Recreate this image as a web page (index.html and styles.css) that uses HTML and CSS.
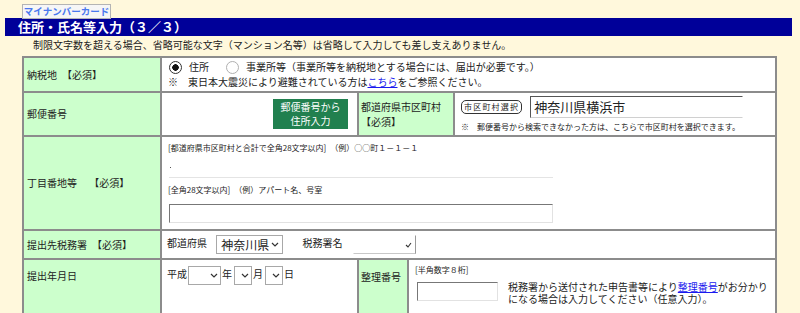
FILE: index.html
```html
<!DOCTYPE html>
<html lang="ja">
<head>
    <meta charset="UTF-8">
    <title>住所・氏名等入力</title>
    <link rel="stylesheet" href="styles.css">
</head>
<body>

    <div class="top"><span class="mynumber">マイナンバーカード</span></div>
    <h1 class="bar">住所・氏名等入力（３／３）</h1>
    <p class="lead">制限文字数を超える場合、省略可能な文字（マンション名等）は省略して入力しても差し支えありません。</p>

    <table class="form">
        <colgroup>
            <col class="c-label">
            <col class="c-a">
            <col class="c-b">
            <col class="c-c">
            <col class="c-d">
        </colgroup>
        <tr class="r1">
            <th>納税地　【必須】</th>
            <td colspan="4" class="place">
                <div class="line">
                    <span class="radio checked"></span><span class="opt">住所</span>
                    <span class="radio"></span><span class="opt">事業所等（事業所等を納税地とする場合には、届出が必要です。）</span>
                </div>
                <div class="line">※　東日本大震災により避難されている方は<a href="#">こちら</a>をご参照ください。</div>
            </td>
        </tr>
        <tr class="r2">
            <th>郵便番号</th>
            <td class="zip"><span class="zip-btn">郵便番号から<br>住所入力</span></td>
            <th colspan="2" class="sub">都道府県市区町村<br>【必須】</th>
            <td class="city">
                <div class="city-row">
                    <span class="pill">市区町村選択</span>
                    <input class="city-input" type="text" value="神奈川県横浜市">
                </div>
                <div class="note">※　郵便番号から検索できなかった方は、こちらで市区町村を選択できます。</div>
            </td>
        </tr>
        <tr class="r3">
            <th>丁目番地等　 【必須】</th>
            <td colspan="4" class="street">
                <div class="note">[都道府県市区町村と合計で全角28文字以内]　（例）○○町１－１－１</div>
                <div class="thin"></div>
                <div class="note">[全角28文字以内]　（例）アパート名、号室</div>
                <input class="wide-input" type="text">
            </td>
        </tr>
        <tr class="r4">
            <th>提出先税務署　【必須】</th>
            <td colspan="4" class="office">
                <span>都道府県</span>
                <span class="select pref">神奈川県
                    <svg width="8" height="5" viewBox="0 0 8 5"><path d="M1 1l3 3 3-3" fill="none" stroke="#333" stroke-width="1.2"/></svg>
                </span>
                <span class="office-label">税務署名</span>
                <span class="select blank">
                    <svg width="7" height="6" viewBox="0 0 7 6"><path d="M1 3l2 2 3-4" fill="none" stroke="#333" stroke-width="1.1"/></svg>
                </span>
            </td>
        </tr>
        <tr class="r5">
            <th>提出年月日</th>
            <td class="date">
                平成<span class="select yy"><svg width="8" height="5" viewBox="0 0 8 5"><path d="M1 1l3 3 3-3" fill="none" stroke="#333" stroke-width="1.2"/></svg></span>年<span class="select md"><svg width="8" height="5" viewBox="0 0 8 5"><path d="M1 1l3 3 3-3" fill="none" stroke="#333" stroke-width="1.2"/></svg></span>月<span class="select md"><svg width="8" height="5" viewBox="0 0 8 5"><path d="M1 1l3 3 3-3" fill="none" stroke="#333" stroke-width="1.2"/></svg></span>日
            </td>
            <th class="sub">整理番号</th>
            <td colspan="2" class="refno">
                <div class="note">[半角数字８桁]</div>
                <div class="ref-row">
                    <input class="ref-input" type="text">
                    <p>税務署から送付された申告書等により<a href="#">整理番号</a>がお分かりになる場合は入力してください（任意入力）。</p>
                </div>
            </td>
        </tr>
        <tr class="r6">
            <th></th>
            <td colspan="4"></td>
        </tr>
    </table>

</body>
</html>
```

FILE: styles.css
```css
body {
    margin: 0;
    background-color: #fff8dc;
    font-family: "Noto Sans CJK JP", sans-serif;
    font-size: 10px;
    color: #222;
}
a {
    color: #1a1aee;
}
.top {
    height: 15px;
    padding: 3px 0 0 22px;
}
.mynumber {
    display: inline-block;
    box-sizing: border-box;
    width: 89px;
    height: 15px;
    background-color: #f6f6f6;
    border: 1px solid #b4b4b4;
    color: #4a78ee;
    font-size: 9.5px;
    font-weight: bold;
    line-height: 13px;
    text-align: center;
}
.bar {
    margin: 0 8px 0 5px;
    height: 18px;
    padding-left: 13px;
    background-color: #000099;
    color: white;
    font-size: 13px;
    font-weight: bold;
    line-height: 18px;
}
.lead {
    margin: 0 0 2px 0;
    padding-left: 33px;
    line-height: 18px;
}

/* form table */
.form {
    margin-left: 22px;
    width: 755px;
    table-layout: fixed;
    border-collapse: collapse;
    background-color: white;
}
.c-label { width: 138px; }
.c-a { width: 197px; }
.c-b { width: 50px; }
.c-c { width: 46px; }
th, td {
    border: 2px solid #8c8c8c;
    padding: 0;
    line-height: 14px;
}
th {
    background-color: #ccffcc;
    font-weight: normal;
    text-align: left;
    padding-left: 3px;
}
td {
    padding-left: 6px;
}
.r1 th { height: 33px; }
.r2 th { height: 42px; }
.r3 th { height: 92px; }
.r4 th { height: 27px; }
.r5 th, .r5 td { vertical-align: top; }
.r5 td { height: 51px; }
.r5 th { padding-top: 9px; height: 42px; }
.r6 th { height: 10px; }

/* row 1 */
.place .line {
    display: flex;
    align-items: center;
    height: 15px;
}
.radio {
    box-sizing: border-box;
    width: 13px;
    height: 13px;
    margin: 0 7px 0 1px;
    border: 1px solid #b0b0b0;
    border-radius: 50%;
    background-color: white;
}
.radio.checked {
    border-color: #333;
    background: radial-gradient(circle, #111 0 3px, white 3.5px);
}
.opt {
    margin-right: 16px;
}

/* row 2 */
.zip {
    text-align: right;
    padding-right: 9px;
}
.zip-btn {
    display: inline-block;
    width: 75px;
    padding: 1px 0;
    background-color: #21804f;
    color: white;
    font-size: 10px;
    line-height: 14px;
    text-align: center;
    vertical-align: middle;
}
.sub {
    padding-left: 2px;
    line-height: 15px;
}
.city {
    vertical-align: top;
    padding-top: 2px;
}
.city-row {
    display: flex;
    align-items: center;
    height: 23px;
}
.pill {
    box-sizing: border-box;
    height: 14px;
    padding: 0 2px;
    border: 1px solid #333;
    border-radius: 5px;
    font-size: 8px;
    letter-spacing: 1.2px;
    line-height: 12px;
}
.city-input {
    box-sizing: border-box;
    width: 213px;
    height: 22px;
    margin-left: 8px;
    padding: 0 3px;
    border: 1px solid;
    border-color: #555 white #d0d0d0 #555;
    font-family: "Noto Sans CJK JP", sans-serif;
    font-size: 13px;
    color: #222;
}
.note {
    font-size: 8px;
    line-height: 14px;
}
.city .note {
    margin-top: 2px;
    line-height: 13px;
}

/* row 3 */
.street {
    vertical-align: top;
    padding-top: 4px;
}
.thin {
    position: relative;
    width: 384px;
    height: 22px;
    margin-left: 1px;
    margin-bottom: 5px;
    border-bottom: 1px solid #e4e4e4;
}
.thin::before {
    content: "";
    position: absolute;
    left: 1px;
    top: 12px;
    width: 1px;
    height: 1px;
    background-color: #555;
}
.wide-input {
    box-sizing: border-box;
    display: block;
    width: 384px;
    height: 19px;
    margin: 7px 0 0 1px;
    border: 1px solid;
    border-color: #777 #e2e2e2 #e2e2e2 #777;
}

/* row 4 */
.office {
    padding-left: 5px;
}
.select {
    box-sizing: border-box;
    display: inline-flex;
    align-items: center;
    justify-content: flex-end;
    height: 19px;
    padding-right: 3px;
    border: 1px solid #a8a8a8;
    background-color: white;
    vertical-align: middle;
}
.pref {
    width: 67px;
    margin-left: 7px;
    justify-content: space-between;
    padding-left: 4px;
    font-size: 12px;
}
.office-label {
    margin-left: 17px;
}
.blank {
    width: 63px;
    margin-left: 8px;
    border-color: transparent #999 #c8c8c8 transparent;
}

/* row 5 */
.date {
    padding-top: 4px;
    padding-left: 5px;
    line-height: 20px;
}
.yy {
    width: 33px;
    margin: 0 1px;
    padding-right: 2px;
}
.md {
    width: 18px;
    margin: 0 1px 0 2px;
    padding-right: 2px;
}
.refno {
    padding-top: 3px;
}
.ref-row {
    display: flex;
    align-items: flex-start;
    margin-top: 4px;
}
.ref-input {
    box-sizing: border-box;
    width: 81px;
    height: 19px;
    margin: 1px 0 0 2px;
    border: 1px solid;
    border-color: #777 #e2e2e2 #e2e2e2 #777;
}
.ref-row p {
    margin: 0 0 0 10px;
    font-size: 10px;
    line-height: 12px;
}
```
